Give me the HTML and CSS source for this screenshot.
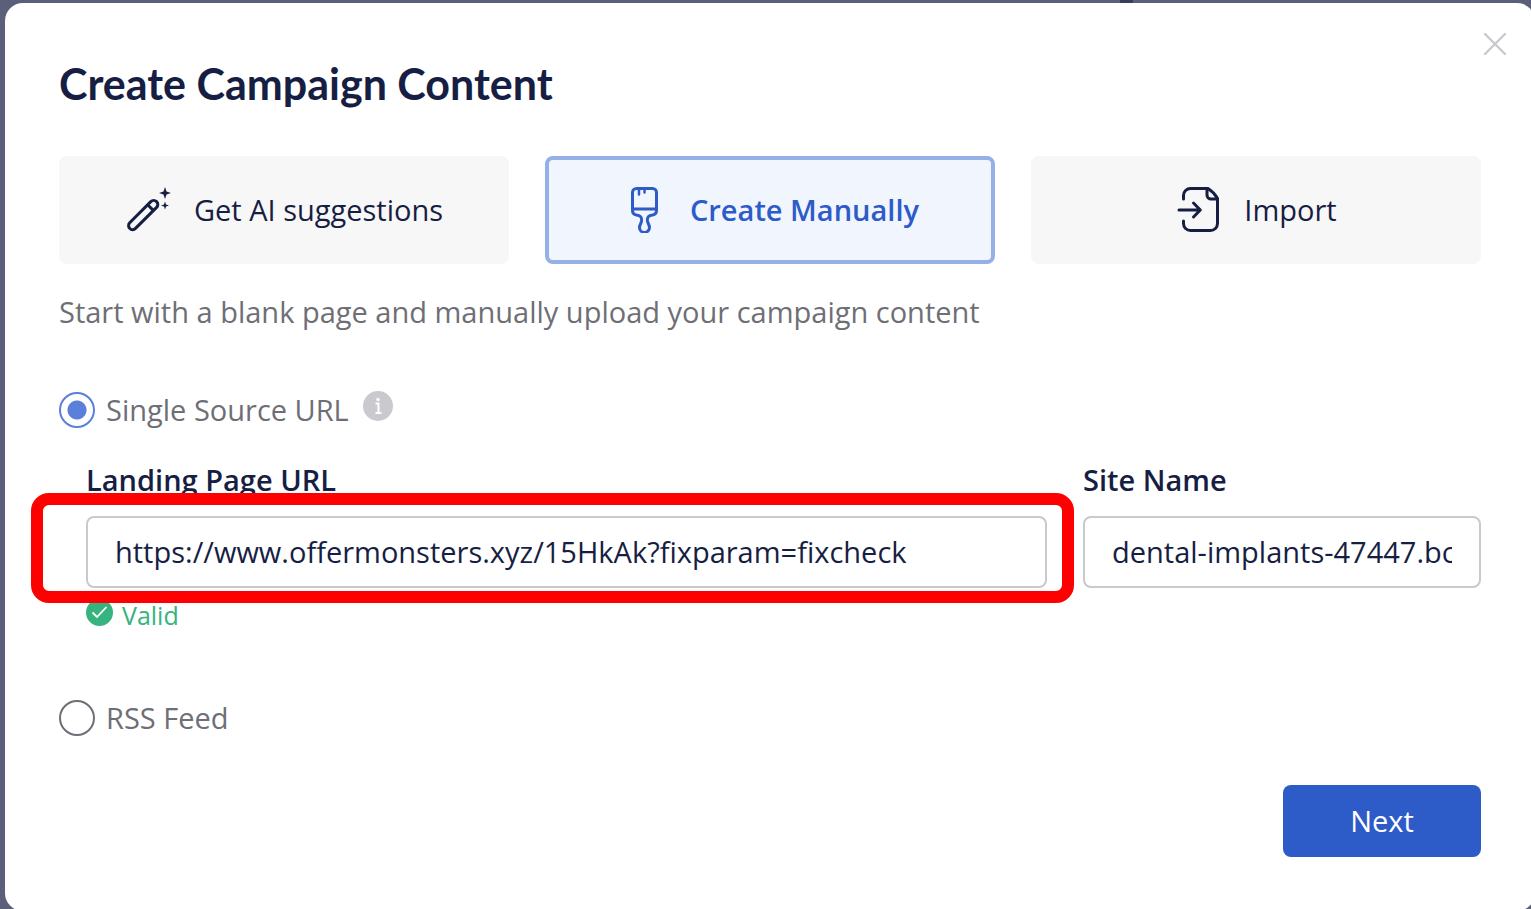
FILE: index.html
```html
<!DOCTYPE html>
<html lang="en">
<head>
    <meta charset="UTF-8">
    <meta name="viewport" content="width=device-width, initial-scale=1.0">
    <title>Create Campaign Content</title>
    <link rel="stylesheet" href="styles.css">
</head>
<body>
    <main class="modal">
        <button class="close-button" type="button" aria-label="Close">
            <svg width="24" height="24" viewBox="0 0 24 24" fill="none" stroke="currentColor" stroke-width="2.4" stroke-linecap="round">
                <path d="M2 2L22 22M22 2L2 22"/>
            </svg>
        </button>
        <h1>Create Campaign Content</h1>

        <div class="tabs">
            <button class="tab" type="button">
                <svg width="48" height="48" viewBox="0 0 48 48" fill="none" stroke="currentColor" stroke-width="3" stroke-linejoin="round">
                    <path d="M4.700 37.800L25.800 16.600a4 4 0 0 1 5.800 5.800L10.500 43.400a4 4 0 0 1-5.800-5.600z"/>
                    <path d="M22.700 19.800l5.800 5.800"/>
                    <path d="M40 2l1.500 4.500L46 8l-4.500 1.500L40 14l-1.500-4.500L34 8l4.500-1.500z" fill="currentColor" stroke="none"/>
                    <path d="M40 16.500l1 3 3 1-3 1-1 3-1-3-3-1 3-1z" fill="currentColor" stroke="none"/>
                </svg>
                Get AI suggestions
            </button>
            <button class="tab active" type="button">
                <svg width="48" height="48" viewBox="0 0 48 48" fill="none" stroke="currentColor" stroke-width="3" stroke-linejoin="round">
                    <path d="M11.500 25.500V7.500a4 4 0 0 1 4-4h16a4 4 0 0 1 4 4v18c0 3-1.500 4-4 4.500-4 .5-5.500 2-5 6 .5 3 2 4 2 6.500a5 5 0 0 1-10 0c0-2.500 1.500-3.500 2-6.500.5-4-1-5.500-5-6-2.500-.5-4-1.500-4-4.500z"/>
                    <path d="M11.500 24h24"/>
                    <path d="M18 4v5.500M23.500 4v3.500" stroke-width="2.500" stroke-linecap="round"/>
                </svg>
                Create Manually
            </button>
            <button class="tab" type="button">
                <svg width="48" height="48" viewBox="0 0 48 48" fill="none" stroke="currentColor" stroke-width="3" stroke-linejoin="round" stroke-linecap="round">
                    <path d="M8.500 14v-3.500a7 7 0 0 1 7-7H33c4 2.500 7 5.500 9.500 10v25a7 7 0 0 1-7 7h-20a7 7 0 0 1-7-7V36"/>
                    <path d="M32 4v6a4 4 0 0 0 4 4h6"/>
                    <path d="M4 25h21M18.500 18l6.800 7-6.800 7"/>
                </svg>
                Import
            </button>
        </div>

        <p class="description">Start with a blank page and manually upload your campaign content</p>

        <div class="radio-row">
            <input type="radio" name="source" id="singleSource" checked>
            <label for="singleSource">Single Source URL</label>
            <svg class="info-icon" width="30" height="30" viewBox="0 0 30 30">
                <circle cx="15" cy="15" r="15" fill="#c9c9ce"/>
                <circle cx="15" cy="8.500" r="1.700" fill="#fff"/>
                <path d="M12.500 12.500h3V22M12.500 22h6" fill="none" stroke="#fff" stroke-width="2"/>
            </svg>
        </div>

        <div class="fields">
            <div class="field">
                <label for="landingUrl">Landing Page URL</label>
                <div class="highlight">
                    <input type="text" id="landingUrl" value="https://www.offermonsters.xyz/15HkAk?fixparam=fixcheck">
                </div>
                <p class="valid">
                    <svg width="27" height="27" viewBox="0 0 27 27">
                        <circle cx="13.500" cy="13.500" r="13.500" fill="#36b37e"/>
                        <path d="M6.500 13.500l4.500 4.500 9.500-10" fill="none" stroke="#fff" stroke-width="1.800"/>
                    </svg>
                    Valid
                </p>
            </div>
            <div class="field">
                <label for="siteName">Site Name</label>
                <input type="text" id="siteName" value="dental-implants-47447.boxoffer.com">
            </div>
        </div>

        <div class="radio-row">
            <input type="radio" name="source" id="rssFeed">
            <label for="rssFeed">RSS Feed</label>
        </div>

        <div class="footer">
            <button class="next-button" type="button">Next</button>
        </div>
    </main>
</body>
</html>
```

FILE: styles.css
```css
* {
    box-sizing: border-box;
}

body {
    margin: 0;
    padding: 3px 0 0 5px;
    min-height: 100vh;
    overflow: hidden;
    background-color: #5b5f7a;
    font-family: 'Open Sans', 'Noto Sans', sans-serif;
    font-size: 29px;
    color: #171e43;
}

/* edge of the page behind the dialog */
body::before {
    content: "";
    position: absolute;
    top: 0;
    left: 1120px;
    width: 13px;
    height: 3px;
    background-color: #3a3d59;
}

button,
input {
    font-family: inherit;
    font-size: inherit;
    color: inherit;
}

button {
    border: none;
    cursor: pointer;
}

.modal {
    position: relative;
    margin-right: -4px;
    padding: 57px 54px 54px;
    background-color: #ffffff;
    border-radius: 18px;
}

.close-button {
    position: absolute;
    top: 29px;
    right: 28px;
    padding: 0;
    width: 24px;
    height: 24px;
    background: none;
    color: #c9c9ce;
}

.close-button svg {
    display: block;
}

h1 {
    margin: 0 0 48px;
    font-family: 'Lato', sans-serif;
    font-size: 43px;
    font-weight: 700;
    line-height: 48px;
}

.tabs {
    display: grid;
    grid-template-columns: repeat(3, 1fr);
    gap: 36px;
}

.tab {
    display: flex;
    align-items: center;
    justify-content: center;
    gap: 21px;
    height: 108px;
    padding: 0 0 2px;
    background-color: #f7f7f7;
    border-radius: 8px;
}

.tab.active {
    background-color: #f1f5fe;
    border: 4px solid #95afe7;
    color: #2d5bc8;
    font-weight: 600;
}

.description {
    margin: 28px 0 60px;
    line-height: 40px;
    color: #6e6f76;
}

.radio-row {
    display: flex;
    align-items: center;
    height: 36px;
    color: #6e6f76;
}

.radio-row input {
    appearance: none;
    margin: 0 11px 0 0;
    width: 36px;
    height: 36px;
    border: 2px solid #6e6f76;
    border-radius: 50%;
}

.radio-row input:checked {
    border-color: #5a80db;
    background: radial-gradient(circle, #5a80db 9px, transparent 10px);
}

.radio-row label {
    padding-bottom: 2px;
}

.info-icon {
    margin: 0 0 8px 14px;
}

.fields {
    display: grid;
    grid-template-columns: 1fr 398px;
    gap: 36px;
    margin: 34px 0 67px;
    padding-left: 27px;
}

.field label {
    display: block;
    margin-bottom: 18px;
    line-height: 36px;
    font-weight: 600;
}

.field input {
    display: block;
    width: 100%;
    height: 72px;
    padding: 0 27px 2px;
    border: 2px solid #c9c9ce;
    border-radius: 8px;
    background-color: #ffffff;
}

.highlight {
    position: relative;
}

/* red frame around the landing page field */
.highlight::after {
    content: "";
    position: absolute;
    top: -23px;
    right: -27px;
    bottom: -15px;
    left: -55px;
    border: 12px solid #ff0000;
    border-radius: 18px;
    pointer-events: none;
    z-index: 1;
}

.valid {
    display: flex;
    gap: 9px;
    margin: 10px 0 0;
    font-size: 25px;
    line-height: 35px;
    color: #36b37e;
}

.valid svg {
    margin-top: 1px;
}

.footer {
    display: flex;
    justify-content: flex-end;
    margin-top: 49px;
}

.next-button {
    width: 198px;
    height: 72px;
    padding: 0 0 2px;
    background-color: #2d5bc8;
    color: #ffffff;
    border-radius: 8px;
}
```
